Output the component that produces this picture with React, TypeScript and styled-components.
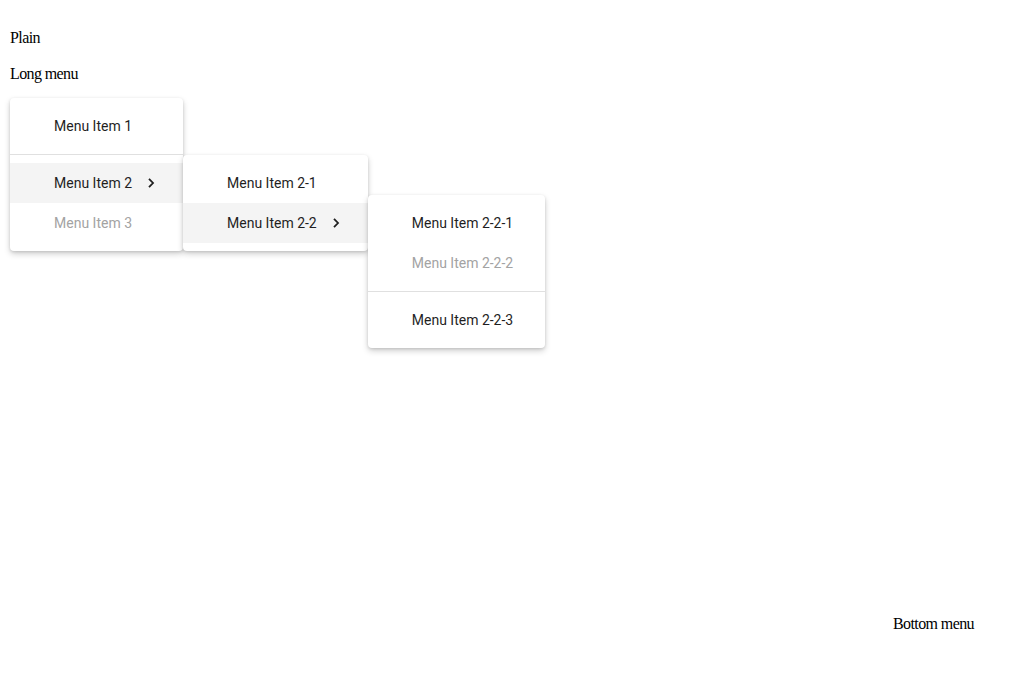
import React from "react";
import styled, { createGlobalStyle } from "styled-components";

const Global = createGlobalStyle`
  html, body { margin: 0; padding: 0; background: #fff; }
  body { font-family: "Liberation Serif", "Times New Roman", serif; font-size: 16px; color: #000; }
`;

const Page = styled.div`
  box-sizing: border-box;
  height: 698px;
  padding: 29px 10px 65px 10px;
  display: flex;
  flex-direction: column;
`;

const Trigger = styled.div`
  position: relative;
  line-height: 18px;
  margin-bottom: 18px;
  align-self: flex-start;
  letter-spacing: -0.6px;
`;

const BottomRow = styled.div`
  margin-top: auto;
  display: flex;
  justify-content: flex-end;
  padding-right: 40px;
  line-height: 18px;
  letter-spacing: -0.6px;
`;

const MenuPanel = styled.div<{ $top: number; $left: string }>`
  position: absolute;
  top: ${(p) => p.$top}px;
  left: ${(p) => p.$left};
  z-index: 1;
  background: #fff;
  border-radius: 4px;
  padding: 8px 0;
  box-shadow: 0 3px 6px rgba(0, 0, 0, 0.18), 0 1px 3px rgba(0, 0, 0, 0.12);
  font-family: Roboto, "Noto Sans", sans-serif;
  font-size: 14px;
  letter-spacing: normal;
  white-space: nowrap;
  display: flex;
  flex-direction: column;
`;

const Item = styled.div<{ $active?: boolean; $disabled?: boolean; $sub?: boolean }>`
  position: relative;
  height: 40px;
  display: flex;
  align-items: center;
  padding: 0 ${(p) => (p.$sub ? 24 : 32)}px 0 44px;
  background: ${(p) => (p.$active ? "#f4f4f4" : "transparent")};
  color: ${(p) => (p.$disabled ? "#a3a3a3" : "#1f1f1f")};
`;

const Divider = styled.div`
  height: 1px;
  background: #e0e0e0;
  margin: 8px 0;
`;

const Chevron = styled.svg`
  width: 16px;
  height: 16px;
  margin-left: 11px;
  flex: none;
`;

const Arrow = () => (
  <Chevron viewBox="0 0 16 16">
    <path d="M6 3.8 L10 8 L6 12.2" fill="none" stroke="#1f1f1f" strokeWidth="1.8" />
  </Chevron>
);

export default function App() {
  return (
    <>
      <Global />
      <Page>
        <Trigger>Plain</Trigger>
        <Trigger>
          Long menu
          <MenuPanel $top={33} $left="0">
            <Item>Menu Item 1</Item>
            <Divider />
            <Item $active $sub>
              Menu Item 2
              <Arrow />
              <MenuPanel $top={-8} $left="100%">
                <Item>Menu Item 2-1</Item>
                <Item $active $sub>
                  Menu Item 2-2
                  <Arrow />
                  <MenuPanel $top={-8} $left="100%">
                    <Item>Menu Item 2-2-1</Item>
                    <Item $disabled>Menu Item 2-2-2</Item>
                    <Divider />
                    <Item>Menu Item 2-2-3</Item>
                  </MenuPanel>
                </Item>
              </MenuPanel>
            </Item>
            <Item $disabled>Menu Item 3</Item>
          </MenuPanel>
        </Trigger>
        <BottomRow>Bottom menu</BottomRow>
      </Page>
    </>
  );
}
